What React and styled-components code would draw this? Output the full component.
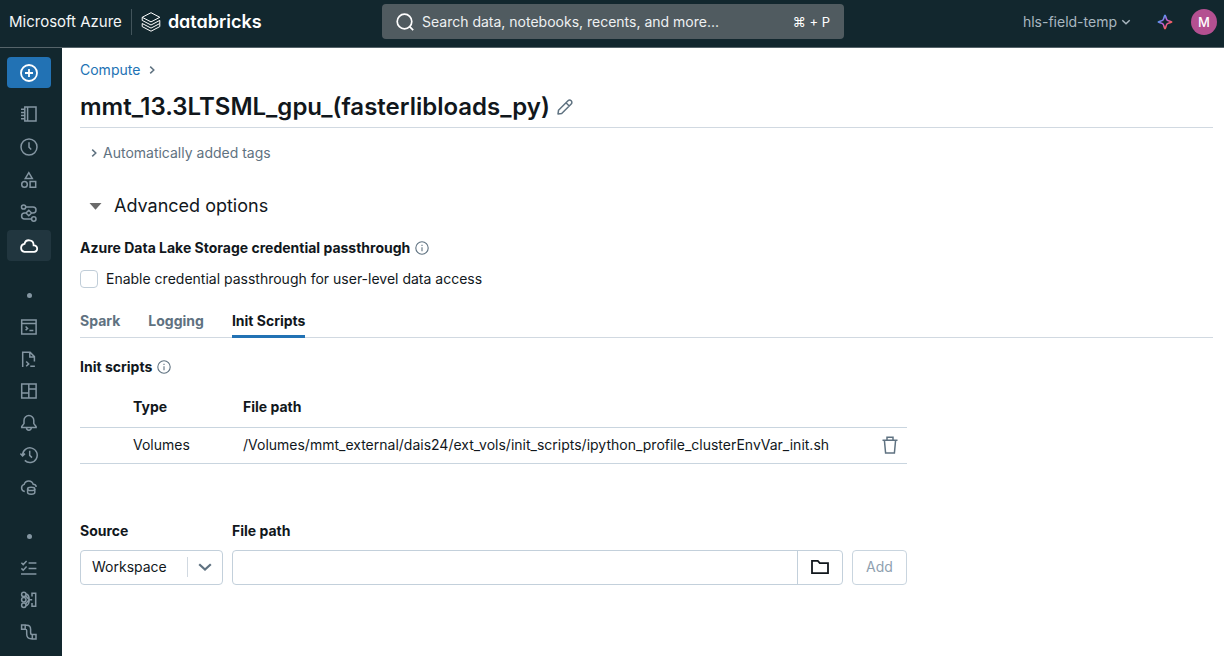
import React from "react";
import styled, { createGlobalStyle, css } from "styled-components";

const Global = createGlobalStyle`
  *, *::before, *::after { box-sizing: border-box; }
  body {
    margin: 0;
    background: #fff;
    color: #11171c;
    font-family: Inter, "Liberation Sans", sans-serif;
    font-size: 14px;
    line-height: 20px;
  }
  button, input, select { font: inherit; color: inherit; margin: 0; }
  button { padding: 0; border: 0; background: none; cursor: pointer; }
  h1, h2, h3, p { margin: 0; }
`;

/* ---------- icons ---------- */

const Svg = styled.svg`
  display: block;
  flex: none;
  width: ${(p) => p.$size}px;
  height: ${(p) => p.$size}px;
  fill: none;
  stroke: currentColor;
  stroke-width: ${(p) => p.$weight};
`;

const Icon = ({ size = 18, weight = 1.5, children }) => (
  <Svg viewBox={`0 0 ${size} ${size}`} $size={size} $weight={weight} aria-hidden="true">
    {children}
  </Svg>
);

const glyphs = {
  plus: (
    <>
      <circle cx="9" cy="9" r="8" strokeWidth="1.8" />
      <path d="M9 5v8M5 9h8" strokeWidth="1.8" />
    </>
  ),
  notebook: <path d="M4.8 2H16v14H4.800zM7.600 2v14M1 4.200h3.800M1 7.400h3.800M1 10.600h3.800M1 13.800h3.800" />,
  clock: (
    <>
      <circle cx="9" cy="9" r="8" />
      <path d="M9 4.300v5l2.200 2.300" />
    </>
  ),
  shapes: (
    <>
      <path d="M8.800 1.600l3.500 5.800h-7zM10.100 10.600h5.600v5.600h-5.600z" />
      <circle cx="4.500" cy="13.400" r="2.800" />
    </>
  ),
  workflow: (
    <>
      <circle cx="3.600" cy="3" r="2.100" />
      <circle cx="13.800" cy="15" r="2.200" />
      <path d="M5.600 3H13a3 3 0 0 1 0 6h-1.500M6 9H4.600a3 3 0 0 0 0 6h7.100M8.800 6.200L11.600 9l-2.800 2.800L6 9z" />
    </>
  ),
  cloud: (
    <path
      d="M4.400 14.800h9.400a3.200 3.200 0 0 0 .3-6.400h-.5v-.6a4.600 4.600 0 0 0-9.100-.9 4 4 0 0 0-.1 7.900z"
      strokeWidth="1.8"
    />
  ),
  terminal: <path d="M1.700 2h14.400v13.900H1.700zM1.700 5.400h14.400M5.600 8.500l2 1.900-2 1.900M9.400 12.500h4" />,
  filecode: <path d="M2.700 17V2.300h7.400l4.300 4.300v4.800M9.800 2.300v4.600h4.600M6.200 11.500l2.500 2.400-2.500 2.400M10.300 16.200h4.600" />,
  dashboard: <path d="M1.700 2h14.400v14H1.700zM8.800 2v14M1.700 11h7.100M8.800 7h7.300" />,
  bell: (
    <path d="M8.900 1.500A4.900 4.900 0 0 0 4 6.400v3.200l-2.300 3v1h14.400v-1l-2.300-3V6.400a4.900 4.900 0 0 0-4.900-4.900zM6.500 13.800a2.400 2.400 0 0 0 4.800 0" />
  ),
  history: <path d="M2.600 9.200a7.300 7.300 0 1 1 2.200 5.200M.4 7.600l2.200 2.300L5 7.600M9.700 4.800v4.600l2.300 2.200" />,
  clouddb: (
    <>
      <path d="M4.800 13.600a3.700 3.700 0 0 1-.6-7.200 4.700 4.700 0 0 1 9-.1 3.200 3.200 0 0 1 3.100 2.500" />
      <ellipse cx="11.200" cy="10.900" rx="3.600" ry="1.600" />
      <path d="M7.600 10.900v3.700c0 .9 1.600 1.600 3.600 1.600s3.600-.7 3.600-1.600v-3.700" />
    </>
  ),
  checklist: <path d="M1.400 3.800l1.800 1.800 3.400-3.600M8.600 4h7.800M1.400 9.400l1.800 1.800 3.400-3.600M8.600 9.600h7.800M1 14.900h15.400" />,
  nodes: (
    <>
      <circle cx="3.800" cy="3.400" r="2.200" />
      <circle cx="3.800" cy="8.800" r="2.200" />
      <circle cx="3.800" cy="14.200" r="2.200" />
      <path d="M5.900 3c2.200.2 3.300 2.300 3.300 5.800s-1.100 5.600-3.300 5.800M5.600 4.800l3.600 4-3.600 4M9.200 8.800h3M12 5.600V2.300h3.700v13H12V12" />
    </>
  ),
  pipeline: (
    <path d="M1.600 2h3.600v4.200H1.600zM12.300 11.600H16v4.300h-3.700zM5.200 2.300h1.700c2.600 0 3.700 1.600 3.700 4v3.200c0 1.400.5 2.200 1.700 2.200M5.200 6c1 0 1.500.6 1.500 1.800V11c0 3 1.800 4.700 4.200 4.700h1.400" />
  ),
};

const ChevronRight = () => (
  <Icon size={10}>
    <path d="M3.200 1.600L6.800 5 3.200 8.400" />
  </Icon>
);

const InfoIcon = () => (
  <Icon size={14} weight={1.1}>
    <circle cx="7" cy="7" r="6.200" />
    <path d="M7 6.300v4M7 3.700v1.300" />
  </Icon>
);

/* ---------- top bar ---------- */

const TopBar = styled.header`
  display: grid;
  grid-template-columns: minmax(0, 1fr) minmax(0, 462px) minmax(0, 1fr);
  align-items: center;
  height: 48px;
  padding: 0 7px 4px 9px;
  background: #12272e;
  color: #fff;
  border-bottom: 1px solid #56646a;
`;

const Brand = styled.div`
  display: flex;
  align-items: center;
  gap: 9px;
  white-space: nowrap;
`;

const Cloud = styled.span`
  font-size: 15px;
  padding-right: 9px;
  line-height: 26px;
  border-right: 1px solid #42545b;
  color: #f4f6f7;
`;

const Logo = styled.a`
  display: flex;
  align-items: center;
  gap: 7px;
  color: #fff;
  text-decoration: none;
  font-size: 18px;
  font-weight: 600;
  font-feature-settings: "cv11";
`;

const Search = styled.label`
  display: flex;
  align-items: center;
  gap: 8px;
  height: 35px;
  padding: 0 14px;
  border-radius: 4px;
  background: #505b60;
`;

const SearchInput = styled.input`
  flex: 1;
  min-width: 0;
  border: 0;
  padding: 0;
  outline: 0;
  background: none;
  &::placeholder { color: #eef1f2; opacity: 1; }
`;

const Shortcut = styled.span`
  font-family: Inter, "DejaVu Sans", sans-serif;
  font-size: 13px;
`;

const Account = styled.div`
  display: flex;
  align-items: center;
  justify-content: flex-end;
  gap: 18px;
`;

const WorkspaceButton = styled.button`
  display: flex;
  align-items: center;
  gap: 4px;
  margin-right: 8px;
  color: #a9b7c0;
  white-space: nowrap;
`;

const Avatar = styled.button`
  width: 26px;
  height: 26px;
  border-radius: 50%;
  background: #b45091;
  color: #fff;
  font-size: 13px;
  font-weight: 500;
`;

/* ---------- side bar ---------- */

const Body = styled.div`
  display: flex;
  min-height: calc(100vh - 48px);
`;

const Sidebar = styled.nav`
  display: flex;
  flex-direction: column;
  align-items: center;
  flex: none;
  width: 62px;
  padding: 9px 11px 0 7px;
  background: #12272e;
`;

const NavGroup = styled.div`
  display: flex;
  flex-direction: column;
  gap: ${(p) => p.$gap}px;
`;

const NavButton = styled.button`
  display: flex;
  align-items: center;
  justify-content: center;
  width: 44px;
  height: 31px;
  border-radius: 4px;
  color: #8496a2;
  ${(p) => p.$active && css`background: #21363f; color: #fff;`}
  ${(p) => p.$primary && css`background: #2272b4; color: #fff; margin-bottom: 8px;`}
`;

const Dot = styled.span`
  width: 5px;
  height: 5px;
  margin: 32px 0 13px;
  border-radius: 50%;
  background: #8496a2;
`;

/* ---------- main ---------- */

const Main = styled.main`
  flex: 1;
  min-width: 0;
  padding: 12px 11px 24px 18px;
`;

const Crumbs = styled.nav`
  display: flex;
  align-items: center;
  gap: 7px;
  color: #5f7281;
`;

const CrumbLink = styled.a`
  color: #2272b4;
  text-decoration: none;
`;

const TitleRow = styled.div`
  display: flex;
  align-items: center;
  gap: 7px;
  margin-top: 11px;
  padding-bottom: 4px;
  border-bottom: 1px solid #d1d9e1;
  color: #5f7281;
`;

const Title = styled.h1`
  color: #11171c;
  font-size: 24px;
  line-height: 32px;
  font-weight: 600;
`;

const TagsToggle = styled.button`
  display: flex;
  align-items: center;
  gap: 4px;
  margin: 15px 0 0 9px;
  color: #5f7281;
`;

const Advanced = styled.button`
  display: flex;
  align-items: center;
  gap: 12px;
  margin: 29px 0 0 9px;
  font-size: 18px;
  line-height: 28px;
`;

const Heading = styled.h3`
  display: flex;
  align-items: center;
  gap: 5px;
  margin-top: ${(p) => p.$top}px;
  font-size: 14px;
  font-weight: 700;
  svg { color: #5f7281; }
`;

const CheckRow = styled.label`
  display: flex;
  align-items: center;
  gap: 8px;
  margin-top: 11px;
`;

const Checkbox = styled.input`
  appearance: none;
  width: 18px;
  height: 18px;
  border: 1px solid #c0cdd8;
  border-radius: 4px;
  background: #fff;
  &:checked { background: #2272b4; }
`;

const Tabs = styled.div`
  display: flex;
  gap: 28px;
  margin-top: 22px;
  border-bottom: 1px solid #d1d9e1;
`;

const Tab = styled.button`
  margin-bottom: -1px;
  padding-bottom: 4px;
  border-bottom: 3px solid ${(p) => (p.$active ? "#2272b4" : "transparent")};
  color: ${(p) => (p.$active ? "#11171c" : "#5f7281")};
  font-weight: 700;
`;

const Table = styled.table`
  width: 100%;
  max-width: 827px;
  margin-top: 10px;
  border-collapse: collapse;
`;

const Cell = styled.td`
  height: ${(p) => (p.as === "th" ? 40 : 36)}px;
  width: ${(p) => p.$width || "auto"};
  padding: 0;
  border-bottom: 1px solid #c9d5df;
  text-align: left;
  font-weight: ${(p) => (p.as === "th" ? 700 : 400)};
`;

const DeleteButton = styled.button`
  display: block;
  margin: 0 auto;
  color: #5f7281;
`;

const Form = styled.form`
  display: flex;
  align-items: flex-end;
  gap: 9px;
  max-width: 827px;
  margin-top: 57px;
`;

const Field = styled.div`
  display: flex;
  flex-direction: column;
  gap: 9px;
  flex: ${(p) => (p.$grow ? "1" : "none")};
  min-width: 0;
`;

const Label = styled.label`
  font-weight: 700;
`;

const Control = styled.div`
  display: flex;
  align-items: center;
  height: 35px;
  width: ${(p) => p.$width || "auto"};
  border: 1px solid #c3d0db;
  border-radius: 4px;
  color: #5f7281;
`;

const Select = styled.select`
  appearance: none;
  flex: 1;
  min-width: 0;
  height: 20px;
  padding: 0 0 0 11px;
  border: 0;
  border-right: 1px solid #d1d9e1;
  outline: 0;
  background: none;
  color: #11171c;
`;

const Caret = styled.span`
  padding: 0 9px;
`;

const PathInput = styled.input`
  flex: 1;
  min-width: 0;
  height: 33px;
  padding: 0 12px;
  border: 0;
  outline: 0;
  background: none;
  color: #11171c;
`;

const Browse = styled.button`
  display: flex;
  align-items: center;
  justify-content: center;
  width: 45px;
  height: 33px;
  border-left: 1px solid #c3d0db;
  color: #11171c;
`;

const AddButton = styled.button`
  width: 55px;
  height: 35px;
  border: 1px solid #c9d5df;
  border-radius: 4px;
  color: #8fa1b0;
`;

const Nav = ({ name, icon, ...rest }) => (
  <NavButton type="button" aria-label={name} {...rest}>
    <Icon>{glyphs[icon]}</Icon>
  </NavButton>
);

export default function App() {
  return (
    <>
      <Global />
      <TopBar>
        <Brand>
          <Cloud>Microsoft Azure</Cloud>
          <Logo href="#">
            <Icon size={20} weight={1}>
              <path d="M1.200 5.300L10 .7l8.800 4.600L10 9.900zM1.200 8.400l8.800 4.600 8.800-4.600M1.200 11.500l8.800 4.600 8.800-4.600M1.200 14.600l8.800 4.600 8.800-4.600M1.200 5.300v3.100M18.800 8.400v3.100M1.200 11.500v3.100M18.800 11.500v3.100" />
            </Icon>
            databricks
          </Logo>
        </Brand>
        <Search>
          <Icon weight={1.7}>
            <circle cx="8.500" cy="8.500" r="7.300" />
            <path d="M13.600 13.600l3.600 3.600" />
          </Icon>
          <SearchInput aria-label="Search" placeholder="Search data, notebooks, recents, and more..." />
          <Shortcut>⌘ + P</Shortcut>
        </Search>
        <Account>
          <WorkspaceButton type="button">
            hls-field-temp
            <Icon size={10}>
              <path d="M1.300 3.200L5 6.800l3.700-3.600" />
            </Icon>
          </WorkspaceButton>
          <button type="button" aria-label="Assistant">
            <Icon size={16} weight={1.6}>
              <defs>
                <linearGradient id="spark" x1="0" y1="0" x2="1" y2="1">
                  <stop offset="0.2" stopColor="#4a9df0" />
                  <stop offset="0.5" stopColor="#c95bd8" />
                  <stop offset="0.8" stopColor="#ff5f46" />
                </linearGradient>
              </defs>
              <path
                stroke="url(#spark)"
                strokeLinejoin="round"
                d="M8 1.200c.7 0 .9 3.600 2 4.800s4.800 1.300 4.800 2-3.700.9-4.800 2-1.300 4.800-2 4.800-.9-3.700-2-4.800-4.800-1.300-4.800-2 3.700-.9 4.800-2 1.300-4.800 2-4.800z"
              />
            </Icon>
          </button>
          <Avatar type="button">M</Avatar>
        </Account>
      </TopBar>
      <Body>
        <Sidebar aria-label="Primary">
          <NavGroup $gap={2}>
            <Nav name="New" icon="plus" $primary />
            <Nav name="Workspace" icon="notebook" />
            <Nav name="Recents" icon="clock" />
            <Nav name="Catalog" icon="shapes" />
            <Nav name="Workflows" icon="workflow" />
            <Nav name="Compute" icon="cloud" $active />
          </NavGroup>
          <Dot />
          <NavGroup $gap={1}>
            <Nav name="SQL Editor" icon="terminal" />
            <Nav name="Queries" icon="filecode" />
            <Nav name="Dashboards" icon="dashboard" />
            <Nav name="Alerts" icon="bell" />
            <Nav name="Query History" icon="history" />
            <Nav name="SQL Warehouses" icon="clouddb" />
          </NavGroup>
          <Dot />
          <NavGroup $gap={1}>
            <Nav name="Job Runs" icon="checklist" />
            <Nav name="Data Ingestion" icon="nodes" />
            <Nav name="Delta Live Tables" icon="pipeline" />
          </NavGroup>
        </Sidebar>
        <Main>
          <Crumbs aria-label="Breadcrumb">
            <CrumbLink href="#">Compute</CrumbLink>
            <ChevronRight />
          </Crumbs>
          <TitleRow>
            <Title>mmt_13.3LTSML_gpu_(fasterlibloads_py)</Title>
            <button type="button" aria-label="Rename">
              <Icon size={16}>
                <path
                  strokeLinejoin="round"
                  d="M1 15l.5-3.700L11 1.800a2.200 2.200 0 0 1 3.200 3.200L4.700 14.500zM9 3.800L12.200 7"
                />
              </Icon>
            </button>
          </TitleRow>
          <TagsToggle type="button" aria-expanded="false">
            <ChevronRight />
            Automatically added tags
          </TagsToggle>
          <Advanced type="button" aria-expanded="true">
            <Icon size={13} weight={0}>
              <path d="M.5 3h12l-6 6.800z" fill="#6b6b6b" />
            </Icon>
            Advanced options
          </Advanced>
          <Heading $top={18}>
            Azure Data Lake Storage credential passthrough
            <InfoIcon />
          </Heading>
          <CheckRow>
            <Checkbox type="checkbox" />
            Enable credential passthrough for user-level data access
          </CheckRow>
          <Tabs role="tablist">
            <Tab type="button" role="tab">Spark</Tab>
            <Tab type="button" role="tab">Logging</Tab>
            <Tab type="button" role="tab" aria-selected="true" $active>Init Scripts</Tab>
          </Tabs>
          <Heading $top={19}>
            Init scripts
            <InfoIcon />
          </Heading>
          <Table>
            <thead>
              <tr>
                <Cell as="th" $width="53px" />
                <Cell as="th" $width="110px">Type</Cell>
                <Cell as="th">File path</Cell>
                <Cell as="th" $width="35px" />
              </tr>
            </thead>
            <tbody>
              <tr>
                <Cell />
                <Cell>Volumes</Cell>
                <Cell>/Volumes/mmt_external/dais24/ext_vols/init_scripts/ipython_profile_clusterEnvVar_init.sh</Cell>
                <Cell>
                  <DeleteButton type="button" aria-label="Delete">
                    <Icon>
                      <path d="M1.500 4.300h15M3.400 4.300l1.200 12.700h8.800l1.200-12.700M6 4.300V1.200h6v3.100" />
                    </Icon>
                  </DeleteButton>
                </Cell>
              </tr>
            </tbody>
          </Table>
          <Form onSubmit={(e) => e.preventDefault()}>
            <Field>
              <Label htmlFor="source">Source</Label>
              <Control $width="143px">
                <Select id="source">
                  <option>Workspace</option>
                </Select>
                <Caret>
                  <Icon size={16} weight={2.2}>
                    <path d="M2.200 5.200L8 10.600l5.800-5.400" />
                  </Icon>
                </Caret>
              </Control>
            </Field>
            <Field $grow>
              <Label htmlFor="path">File path</Label>
              <Control>
                <PathInput id="path" type="text" />
                <Browse type="button" aria-label="Browse">
                  <Icon weight={1.8}>
                    <path d="M1 2.900h5.800l2 2.200h8.200v10H1z" />
                  </Icon>
                </Browse>
              </Control>
            </Field>
            <AddButton type="submit" disabled>Add</AddButton>
          </Form>
        </Main>
      </Body>
    </>
  );
}
